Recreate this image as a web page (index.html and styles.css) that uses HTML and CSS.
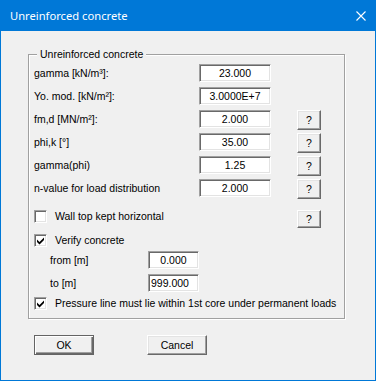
FILE: index.html
```html
<!DOCTYPE html>
<html lang="en">
<head>
    <meta charset="UTF-8">
    <title>Unreinforced concrete</title>
    <link rel="stylesheet" href="styles.css">
</head>
<body>
    <div class="window">
        <div class="titlebar">
            <span class="title">Unreinforced concrete</span>
            <svg class="close" width="10" height="10" viewBox="0 0 10 10">
                <path d="M0.5 0.5 L9.5 9.5 M9.5 0.5 L0.5 9.5" stroke="#fff" stroke-width="1.1" fill="none"/>
            </svg>
        </div>

        <div class="dialog">
            <div class="group">
                <div class="group-title">Unreinforced concrete</div>

                <div class="rows">
                    <div class="row">
                        <label class="field-label">gamma [kN/m³]:</label>
                        <input class="field" type="text" value="23.000">
                    </div>
                    <div class="row">
                        <label class="field-label">Yo. mod. [kN/m²]:</label>
                        <input class="field" type="text" value="3.0000E+7">
                    </div>
                    <div class="row">
                        <label class="field-label">fm,d [MN/m²]:</label>
                        <input class="field" type="text" value="2.000">
                        <button class="btn help">?</button>
                    </div>
                    <div class="row">
                        <label class="field-label">phi,k [°]</label>
                        <input class="field" type="text" value="35.00">
                        <button class="btn help">?</button>
                    </div>
                    <div class="row">
                        <label class="field-label">gamma(phi)</label>
                        <input class="field" type="text" value="1.25">
                        <button class="btn help">?</button>
                    </div>
                    <div class="row row-spaced">
                        <label class="field-label">n-value for load distribution</label>
                        <input class="field" type="text" value="2.000">
                        <button class="btn help">?</button>
                    </div>

                    <div class="check-row wall-row">
                        <span class="checkbox"></span>
                        <span class="check-label">Wall top kept horizontal</span>
                        <button class="btn help help-right">?</button>
                    </div>
                    <div class="check-row verify-row">
                        <span class="checkbox">
                            <svg width="9" height="9" viewBox="0 0 9 9"><polygon points="1,3.5 3.5,6 8,1.5 8,4 3.5,8.5 1,6" fill="#000"/></svg>
                        </span>
                        <span class="check-label">Verify concrete</span>
                    </div>
                    <div class="row sub-row from-row">
                        <label class="sub-label">from [m]</label>
                        <input class="field small" type="text" value="0.000">
                    </div>
                    <div class="row sub-row">
                        <label class="sub-label">to [m]</label>
                        <input class="field small left" type="text" value="999.000">
                    </div>
                    <div class="check-row pressure-row">
                        <span class="checkbox">
                            <svg width="9" height="9" viewBox="0 0 9 9"><polygon points="1,3.5 3.5,6 8,1.5 8,4 3.5,8.5 1,6" fill="#000"/></svg>
                        </span>
                        <span class="check-label">Pressure line must lie within 1st core under permanent loads</span>
                    </div>
                </div>
            </div>

            <div class="actions">
                <button class="btn push default">OK</button>
                <button class="btn push">Cancel</button>
            </div>
        </div>
    </div>
</body>
</html>
```

FILE: styles.css
```css
body {
    margin: 0;
    background: #f0f0f0;
}
.window {
    width: 376px;
    height: 381px;
    box-sizing: border-box;
    border: 1px solid #0078d7;
    border-top: none;
    background: #f0f0f0;
    font-family: "Liberation Sans", Arial, sans-serif;
    font-size: 10.5px;
    color: #000;
}
.titlebar {
    height: 31px;
    margin: 0 -1px;
    background: #0078d7;
    color: #fff;
    display: flex;
    align-items: center;
    padding: 0 10px;
}
.title {
    flex: 1;
    font-family: "Noto Sans", sans-serif;
    font-size: 11.2px;
}
.dialog {
    padding: 23px 0 0 27px;
}
.group {
    width: 317px;
    box-sizing: border-box;
    border: 1px solid #a0a0a0;
    box-shadow: 1px 1px 0 #fff, inset 1px 1px 0 #fff;
    padding: 0 0 8px 5px;
}
.group-title {
    width: fit-content;
    height: 14px;
    line-height: 14px;
    margin: -8px 0 0 3px;
    padding: 0 3px;
    background: #f0f0f0;
}
.rows {
    margin-top: 3px;
}
.row {
    display: flex;
    align-items: flex-start;
    height: 18px;
    margin-bottom: 5px;
}
.row-spaced {
    margin-top: 2px;
    margin-bottom: 0;
}
.field-label {
    width: 165px;
    line-height: 18px;
}
.field {
    width: 72px;
    height: 18px;
    box-sizing: border-box;
    margin: 0;
    padding: 0 2px;
    border: 1px solid;
    border-color: #a0a0a0 #fff #fff #a0a0a0;
    box-shadow: inset 1px 1px 0 #696969, inset -1px -1px 0 #e3e3e3;
    background: #fff;
    font-family: "Liberation Sans", Arial, sans-serif;
    font-size: 10.5px;
    color: #000;
    text-align: center;
    outline: none;
}
.field.small {
    width: 51px;
}
.field.left {
    text-align: left;
}
.btn {
    box-sizing: border-box;
    margin: 0;
    padding: 0;
    border: 1px solid;
    border-color: #fff #696969 #696969 #fff;
    box-shadow: inset -1px -1px 0 #a0a0a0, inset 1px 1px 0 #e3e3e3;
    background: #f0f0f0;
    font-family: "Liberation Sans", Arial, sans-serif;
    font-size: 10.5px;
    color: #000;
}
.help {
    width: 24px;
    height: 20px;
    margin-left: 26px;
}
.check-row {
    display: flex;
    align-items: flex-start;
}
.checkbox {
    width: 13px;
    height: 13px;
    box-sizing: border-box;
    border: 1px solid;
    border-color: #a0a0a0 #fff #fff #a0a0a0;
    box-shadow: inset 1px 1px 0 #696969, inset -1px -1px 0 #e3e3e3;
    background: #fff;
    padding: 1px;
    margin-right: 8px;
}
.checkbox svg {
    display: block;
}
.check-label {
    line-height: 13px;
}
.wall-row {
    margin-top: 13px;
    height: 18px;
}
.wall-row .check-label {
    flex: 1;
}
.help-right {
    margin: 0 23px 0 0;
    height: 18px;
}
.verify-row {
    margin-top: 6px;
    height: 13px;
}
.sub-label {
    width: 98px;
    padding-left: 16px;
    line-height: 18px;
}
.from-row {
    margin-top: 4px;
}
.pressure-row {
    margin-top: 5px;
    height: 13px;
}
.actions {
    display: flex;
    gap: 53px;
    margin: 16px 0 0 6px;
}
.push {
    width: 60px;
    height: 20px;
}
.push.default {
    border: 1px solid #646464;
    box-shadow: inset 1px 1px 0 #fff, inset -1px -1px 0 #696969, inset -2px -2px 0 #a0a0a0;
}
```
